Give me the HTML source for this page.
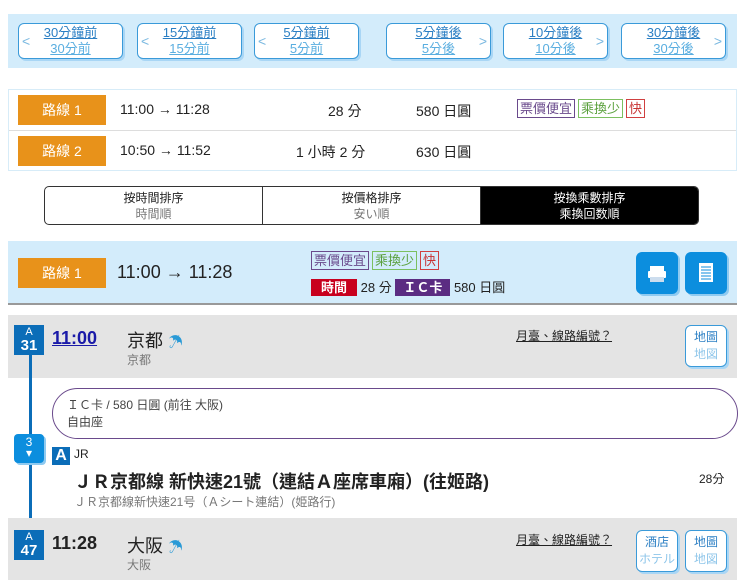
<!DOCTYPE html>
<html><head><meta charset="utf-8"><style>
*{box-sizing:border-box;margin:0;padding:0}
body{width:740px;height:580px;background:#fff;font-family:"Liberation Sans","Noto Sans CJK TC",sans-serif;position:relative;overflow:hidden;color:#222}
.a{position:absolute}
.nav{left:8px;top:14px;width:729px;height:54px;background:#d3ecfb}
.nb{position:absolute;top:9px;width:105px;height:36px;border:1px solid #3a9ad9;border-radius:6px;background:#fff;box-shadow:2px 2px 0 #a9d6f5;text-align:center;font-size:13px;line-height:16px;padding-top:1px}
.nb u{color:#2b7fc4;display:block}
.nb u+u{color:#5aaee0}
.nb i{position:absolute;top:9px;font-style:normal;color:#7ab8e0;font-size:14px}
.lst{left:8px;top:89px;width:729px;height:82px;border:1px solid #d7ecf8}
.row{position:absolute;left:0;width:727px;height:41px;font-size:14px}
.lbl{position:absolute;background:#e8921a;color:#fff;text-align:center;font-size:14px}
.tag{display:inline-block;border:1px solid;font-size:13px;line-height:17px;padding:0 2px;margin-right:3px}
.sort{left:44px;top:186px;width:655px;height:39px;border:1px solid #333;border-radius:5px;overflow:hidden;display:flex}
.sort div{flex:1;text-align:center;font-size:12px;line-height:16px;padding-top:3px;border-right:1px solid #333}
.sort span{color:#777;display:block}
.hd{left:8px;top:241px;width:729px;height:64px;background:#d3ecfb;border-bottom:2px solid #999}
.ib{position:absolute;top:11px;width:42px;height:42px;background:#0c8ede;border-radius:6px;box-shadow:2px 2px 0 #8fcaf0}
.gray{position:absolute;left:8px;width:729px;background:#e4e4e4}
.st{position:absolute;left:14px;width:30px;height:30px;background:#0b6db8;color:#fff;text-align:center;font-weight:bold;font-size:15px;line-height:13px;padding-top:1px}
.st small{font-size:11px;font-weight:normal;display:block}
.mb{position:absolute;width:42px;height:42px;border:1px solid #3a9ad9;border-radius:6px;background:#fff;box-shadow:2px 2px 0 #a9d6f5;text-align:center;font-size:12px;line-height:17px;padding-top:3px;color:#2b7fc4}
.mb span{color:#8fc6ea;display:block}
.lnk{position:absolute;font-size:12px;text-decoration:underline;color:#222}
</style></head><body>
<div class="a nav">
<div class="nb" style="left:10px"><i style="left:3px">&lt;</i><u>30分鐘前</u><u>30分前</u></div>
<div class="nb" style="left:129px"><i style="left:3px">&lt;</i><u>15分鐘前</u><u>15分前</u></div>
<div class="nb" style="left:246px"><i style="left:3px">&lt;</i><u>5分鐘前</u><u>5分前</u></div>
<div class="nb" style="left:378px"><i style="right:3px">&gt;</i><u>5分鐘後</u><u>5分後</u></div>
<div class="nb" style="left:495px"><i style="right:3px">&gt;</i><u>10分鐘後</u><u>10分後</u></div>
<div class="nb" style="left:613px"><i style="right:3px">&gt;</i><u>30分鐘後</u><u>30分後</u></div>
</div>
<div class="a lst">
<div class="row" style="top:0;border-bottom:1px solid #ddd">
<div class="lbl" style="left:9px;top:5px;width:88px;height:30px;line-height:30px">路線 1</div>
<span class="a" style="left:111px;top:11px">11:00 → 11:28</span>
<span class="a" style="left:319px;top:11px">28 分</span>
<span class="a" style="left:407px;top:11px">580 日圓</span>
<span class="a" style="left:508px;top:9px"><span class="tag" style="color:#6a4a8c;border-color:#6a4a8c">票價便宜</span><span class="tag" style="color:#5aa03c;border-color:#7cc060">乘換少</span><span class="tag" style="color:#c83232;border-color:#d04040">快</span></span>
</div>
<div class="row" style="top:41px">
<div class="lbl" style="left:9px;top:5px;width:88px;height:30px;line-height:30px">路線 2</div>
<span class="a" style="left:111px;top:11px">10:50 → 11:52</span>
<span class="a" style="left:287px;top:11px">1 小時 2 分</span>
<span class="a" style="left:407px;top:11px">630 日圓</span>
</div>
</div>
<div class="a sort">
<div>按時間排序<span>時間順</span></div>
<div>按價格排序<span>安い順</span></div>
<div style="background:#000;color:#fff;border:none">按換乘數排序<span style="color:#fff">乘換回数順</span></div>
</div>
<div class="a hd">
<div class="lbl" style="left:10px;top:17px;width:88px;height:30px;line-height:30px">路線 1</div>
<span class="a" style="left:109px;top:21px;font-size:18px">11:00 → 11:28</span>
<span class="a" style="left:303px;top:10px"><span class="tag" style="color:#6a4a8c;border-color:#6a4a8c">票價便宜</span><span class="tag" style="color:#5aa03c;border-color:#7cc060">乘換少</span><span class="tag" style="color:#c83232;border-color:#d04040">快</span></span>
<span class="a" style="left:303px;top:36px;font-size:13px;white-space:nowrap"><span style="background:#c8001e;color:#fff;padding:1px 10px;font-weight:bold">時間</span> 28 分 <span style="background:#5b2c82;color:#fff;padding:1px 8px;font-weight:bold">ＩＣ卡</span> 580 日圓</span>
<div class="ib" style="left:628px"><svg width="42" height="42"><rect x="14" y="14" width="14" height="5" fill="#fff"/><rect x="12" y="19" width="18" height="7" rx="1" fill="#fff"/><rect x="14" y="25" width="14" height="5" fill="#cde"/></svg></div>
<div class="ib" style="left:677px"><svg width="42" height="42"><rect x="14" y="11" width="14" height="19" fill="#fff"/><path d="M16 15h10M16 18h10M16 21h10M16 24h10M16 27h10" stroke="#0c8ede" stroke-width="1"/></svg></div>
</div>
<div class="gray" style="top:315px;height:63px"></div>
<div class="a" style="left:29px;top:350px;width:3px;height:185px;background:#0b6db8"></div>
<div class="st" style="top:325px"><small>A</small>31</div>
<span class="a" style="left:52px;top:328px;font-size:18px;font-weight:bold;color:#1a1aa8;text-decoration:underline">11:00</span>
<span class="a" style="left:127px;top:327px;font-size:18px">京都 <span style="color:#2a9ad6;font-size:15px">☂</span></span>
<span class="a" style="left:127px;top:351px;font-size:12px;color:#777">京都</span>
<span class="lnk" style="left:516px;top:327px">月臺、線路編號？</span>
<div class="mb" style="left:685px;top:325px">地圖<span>地図</span></div>
<div class="a" style="left:52px;top:388px;width:686px;height:51px;border:1px solid #6a4a8c;border-radius:26px;font-size:12px;line-height:17px;padding:8px 0 0 14px;color:#444">ＩＣ卡 / 580 日圓 (前往 大阪)<br>自由座</div>
<div class="a" style="left:14px;top:434px;width:30px;height:29px;background:#0c8ede;border-radius:4px;box-shadow:2px 2px 0 #8fcaf0;color:#fff;text-align:center;font-size:12px;line-height:11px;padding-top:3px">3<br>▾</div>
<div class="a" style="left:52px;top:447px;width:18px;height:18px;background:#0b6db8;color:#fff;font-weight:bold;font-size:16px;text-align:center;line-height:18px">A</div>
<span class="a" style="left:74px;top:447px;font-size:12px">JR</span>
<span class="a" style="left:74px;top:468px;font-size:18px;font-weight:bold;white-space:nowrap">ＪＲ京都線 新快速21號（連結Ａ座席車廂）(往姬路)</span>
<span class="a" style="left:74px;top:493px;font-size:12px;color:#777">ＪＲ京都線新快速21号（Ａシート連結）(姫路行)</span>
<span class="a" style="left:699px;top:470px;font-size:12px">28分</span>
<div class="gray" style="top:518px;height:62px"></div>
<div class="st" style="top:530px"><small>A</small>47</div>
<span class="a" style="left:52px;top:533px;font-size:18px;font-weight:bold">11:28</span>
<span class="a" style="left:127px;top:532px;font-size:18px">大阪 <span style="color:#2a9ad6;font-size:15px">☂</span></span>
<span class="a" style="left:127px;top:556px;font-size:12px;color:#777">大阪</span>
<span class="lnk" style="left:516px;top:531px">月臺、線路編號？</span>
<div class="mb" style="left:636px;top:530px">酒店<span>ホテル</span></div>
<div class="mb" style="left:685px;top:530px">地圖<span>地図</span></div>
</body></html>
